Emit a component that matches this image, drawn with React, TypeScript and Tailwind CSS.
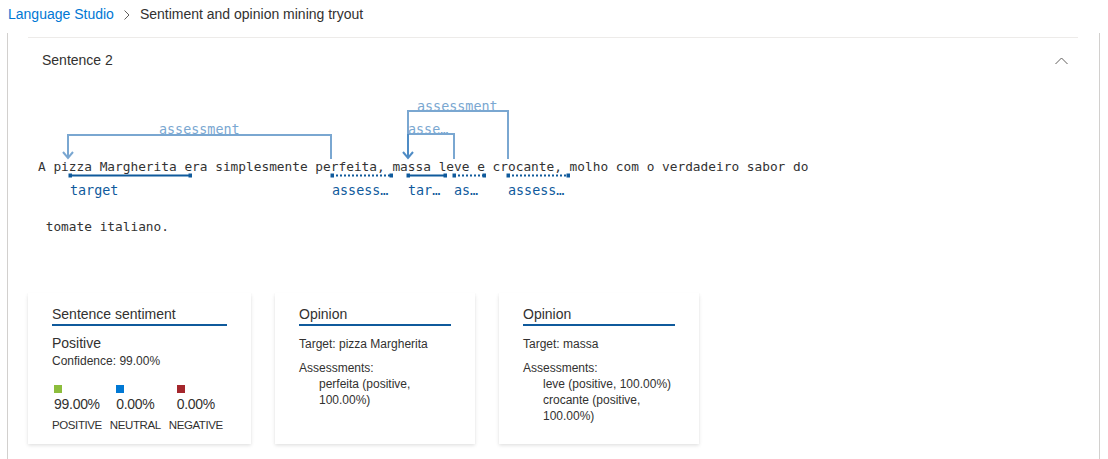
import React from "react";

const sans = "font-['Segoe_UI','Liberation_Sans',Arial,sans-serif]";
const mono = "'DejaVu Sans Mono', 'Liberation Mono', monospace";

// page coords -> diagram coords (diagram box starts at x=28, y=83)
const X = (x: number) => x - 28;
const Y = (y: number) => y - 83;

const light = "#7aa7d1";
const dark = "#0f5a9c";

interface Span {
  from: number;
  to: number;
  label: string;
  dotted?: boolean;
}

const spans: Span[] = [
  { from: 70, to: 190, label: "target" },
  { from: 332, to: 391, label: "assess…", dotted: true },
  { from: 408, to: 445, label: "tar…" },
  { from: 454, to: 484, label: "as…", dotted: true },
  { from: 508, to: 568, label: "assess…", dotted: true },
];

const Diagram = () => (
  <svg
    className="absolute left-0 top-0 pointer-events-none"
    width={1050}
    height={180}
    fill="none"
  >
    {/* arcs */}
    <g stroke={light} strokeWidth={2}>
      <path d={`M${X(331)} ${Y(159)} V${Y(135)} H${X(68)} V${Y(157)}`} />
      <path d={`M${X(63)} ${Y(152)} L${X(68)} ${Y(158)} L${X(73)} ${Y(152)}`} />
      <path d={`M${X(508)} ${Y(159)} V${Y(111)} H${X(408)} V${Y(134)}`} />
      <path d={`M${X(454)} ${Y(159)} V${Y(134)} H${X(408)}`} />
    </g>
    <g stroke="#4f8cc5" strokeWidth={2}>
      <path d={`M${X(408)} ${Y(134)} V${Y(157)}`} />
      <path d={`M${X(403)} ${Y(152)} L${X(408)} ${Y(158)} L${X(413)} ${Y(152)}`} />
    </g>
    <g fill={light} fontFamily={mono} fontSize={13.4}>
      <text x={X(159)} y={Y(134)}>assessment</text>
      <text x={X(417)} y={Y(111)}>assessment</text>
      <text x={X(408)} y={Y(134)}>asse…</text>
    </g>

    {/* underlines */}
    {spans.map((s, i) => (
      <g key={i}>
        <line
          x1={X(s.from)}
          x2={X(s.to)}
          y1={Y(175.5)}
          y2={Y(175.5)}
          stroke={dark}
          strokeWidth={2}
          strokeDasharray={s.dotted ? "2 2" : undefined}
        />
        <rect x={X(s.from) - 1.5} y={Y(173.5)} width={3.5} height={4} fill={dark} />
        <rect x={X(s.to) - 1.5} y={Y(173.5)} width={3.5} height={4} fill={dark} />
        <text
          x={X(s.from)}
          y={Y(195)}
          fill={dark}
          fontFamily={mono}
          fontSize={13.4}
        >
          {s.label}
        </text>
      </g>
    ))}
  </svg>
);

const Card = ({
  title,
  width,
  children,
}: {
  title: string;
  width: string;
  children: React.ReactNode;
}) => (
  <div
    className={`${width} h-[151px] bg-white px-6 pt-[11px] shadow-[0_1.6px_3.6px_rgba(0,0,0,0.13),0_0.3px_0.9px_rgba(0,0,0,0.11)]`}
  >
    <div className="text-[14px] leading-[20px] text-[#323130] border-b-2 border-[#0f5a9c]">
      {title}
    </div>
    {children}
  </div>
);

const Score = ({
  color,
  value,
  label,
}: {
  color: string;
  value: string;
  label: string;
}) => (
  <div className="flex flex-col items-center">
    <div className="flex flex-col items-start">
      <div className={`w-2 h-2 ${color}`} />
      <div className="text-[14px] leading-[20px] mt-px tracking-[-0.3px]">{value}</div>
    </div>
    <div className="text-[11.5px] leading-4 mt-[3px] tracking-[-0.4px]">{label}</div>
  </div>
);

export default function App() {
  return (
    <div className={`${sans} w-[1108px] h-[459px] overflow-hidden bg-white text-[#323130]`}>
      {/* breadcrumb */}
      <div className="h-[29px] flex items-center pl-2 text-[14px]">
        <span className="text-[#0078d4]">Language Studio</span>
        <svg width="6" height="10" className="mx-[10px]" fill="none">
          <path d="M0.5 0.5 L5 5 L0.5 9.5" stroke="#605e5c" strokeWidth="1" />
        </svg>
        <span>Sentiment and opinion mining tryout</span>
      </div>

      <div className="mt-[4px] ml-[7px] w-[1093px] h-[430px] border-l border-r border-[#d2d0ce] pl-5 pr-[21px] pt-[4px]">
        <div className="border-t border-[#edebe9]">
          {/* accordion header */}
          <div className="h-[45px] flex items-center justify-between pl-[14px] pr-[10px]">
            <span className="text-[14px]">Sentence 2</span>
            <svg width="13" height="8" fill="none">
              <path d="M0.5 7 L6.5 1 L12.5 7" stroke="#605e5c" strokeWidth="1" />
            </svg>
          </div>

          {/* annotated sentence */}
          <div
            className="relative pl-[10px] pt-[74px] text-[12.8px] leading-[20px] text-[#333] whitespace-pre"
            style={{ fontFamily: mono }}
          >
            <Diagram />
            <div>
              A pizza Margherita era simplesmente perfeita, massa leve e crocante, molho com o verdadeiro sabor do
            </div>
            <div className="mt-[40px]"> tomate italiano.</div>
          </div>

          {/* result cards */}
          <div className="flex gap-6 mt-[56px]">
            <Card title="Sentence sentiment" width="w-[223px]">
              <div className="mt-[7px] text-[14px] leading-[20px]">Positive</div>
              <div className="text-[12px] leading-4">Confidence: 99.00%</div>
              <div className="flex gap-2 mt-4">
                <Score color="bg-[#8cbd3c]" value="99.00%" label="POSITIVE" />
                <Score color="bg-[#0078d4]" value="0.00%" label="NEUTRAL" />
                <Score color="bg-[#a4262c]" value="0.00%" label="NEGATIVE" />
              </div>
            </Card>
            <Card title="Opinion" width="w-[200px]">
              <div className="mt-[10px] text-[12px] leading-4">Target: pizza Margherita</div>
              <div className="mt-2 text-[12px] leading-4">Assessments:</div>
              <div className="pl-5 text-[12px] leading-4">perfeita (positive, 100.00%)</div>
            </Card>
            <Card title="Opinion" width="w-[200px]">
              <div className="mt-[10px] text-[12px] leading-4">Target: massa</div>
              <div className="mt-2 text-[12px] leading-4">Assessments:</div>
              <div className="pl-5 text-[12px] leading-4">leve (positive, 100.00%)</div>
              <div className="pl-5 text-[12px] leading-4">crocante (positive, 100.00%)</div>
            </Card>
          </div>
        </div>
      </div>
    </div>
  );
}
